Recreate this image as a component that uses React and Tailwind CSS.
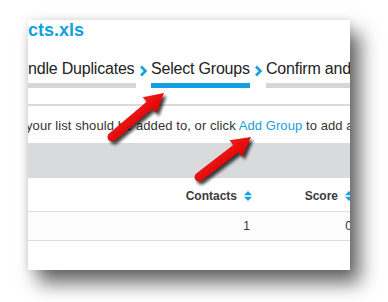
import React from "react";

function Chevron() {
  return (
    <svg width="9" height="14" viewBox="0 0 9 14" className="shrink-0">
      <polyline points="2,2.5 6.5,7 2,11.5" fill="none" stroke="#1a9ee0" strokeWidth="2.6" strokeLinecap="butt" strokeLinejoin="miter" />
    </svg>
  );
}

function SortIcon() {
  return (
    <svg width="8" height="10" viewBox="0 0 8 10" className="shrink-0">
      <polygon points="0,4.3 4,0 8,4.3" fill="#1a9ee0" />
      <polygon points="0,5.7 8,5.7 4,10" fill="#1a9ee0" />
    </svg>
  );
}

function Arrow({ x0, y0, x1, y1, id }) {
  const dx = x1 - x0;
  const dy = y1 - y0;
  const L = Math.sqrt(dx * dx + dy * dy);
  const a = (Math.atan2(dy, dx) * 180) / Math.PI;
  const w = 4.5;
  const h = 10.5;
  const hl = 19;
  const d = `M0 ${-w} L${L - hl} ${-w} L${L - hl} ${-h} L${L} 0 L${L - hl} ${h} L${L - hl} ${w} L0 ${w} A${w} ${w} 0 0 1 0 ${-w} Z`;
  return (
    <g>
      <g transform={`translate(${x0 + 2.5} ${y0 + 3}) rotate(${a})`} filter="url(#blur)">
        <path d={d} fill="#000" opacity="0.75" />
      </g>
      <g transform={`translate(${x0} ${y0}) rotate(${a})`}>
        <path d={d} fill={`url(#${id})`} />
      </g>
    </g>
  );
}

export default function App() {
  return (
    <div className="relative w-[388px] h-[302px] bg-white overflow-hidden" style={{ fontFamily: '"Liberation Sans", Arial, sans-serif' }}>
      <div className="pl-[28px] pt-[20px]">
        <div className="w-[322px] h-[250px] bg-white overflow-hidden shadow-[10px_13px_18px_rgba(0,0,0,0.6),0_0_8px_rgba(0,0,0,0.12)]">
          <div className="text-[18px] leading-[21px] font-bold text-[#139fe0] whitespace-nowrap">cts.xls</div>

          <div className="mt-[19px] flex items-start whitespace-nowrap text-[16px] leading-[18px] text-[#222]">
            <div className="flex flex-col w-[108px] shrink-0">
              <span className="tracking-[-0.2px]">ndle Duplicates</span>
              <div className="mt-[5px] h-[5px] bg-[#d6d6d6]" />
            </div>
            <div className="w-[15px] flex justify-center pt-[4px] shrink-0"><Chevron /></div>
            <div className="flex flex-col w-[99px] shrink-0">
              <span className="tracking-[-0.2px]">Select Groups</span>
              <div className="mt-[5px] h-[5px] bg-[#139fe0]" />
            </div>
            <div className="w-[16px] flex justify-center pt-[4px] shrink-0"><Chevron /></div>
            <div className="flex flex-col w-[120px] shrink-0">
              <span className="tracking-[-0.2px]">Confirm and Import</span>
              <div className="mt-[5px] h-[5px] bg-[#d6d6d6]" />
            </div>
          </div>

          <div className="mt-[16px] h-[2px] bg-[#dadada]" />

          <div className="mt-[12px] ml-[-2px] text-[13px] leading-[15px] text-[#333] whitespace-nowrap tracking-[0.08px]">
            your list should be added to, or click <span className="text-[#1a9ee0]">Add Group</span> to add a new group.
          </div>

          <div className="mt-[10px] h-[35px] bg-[#d9dadc]" />

          <div className="h-[34px] flex items-center text-[12px] leading-[14px] font-bold text-[#3a3a3a] border-b border-[#dddddd] whitespace-nowrap">
            <div className="w-[224px] shrink-0 flex justify-end items-center gap-[7px] pt-[2px]">
              <span>Contacts</span>
              <SortIcon />
            </div>
            <div className="w-[101px] shrink-0 flex justify-end items-center gap-[7px] pt-[2px]">
              <span>Score</span>
              <SortIcon />
            </div>
          </div>

          <div className="h-[29px] flex items-center text-[12px] leading-[14px] text-[#333] bg-[#fcfcfc] border-b border-[#dddddd] whitespace-nowrap">
            <div className="w-[222px] shrink-0 text-right">1</div>
            <div className="w-[102px] shrink-0 text-right">0</div>
          </div>
        </div>
      </div>

      <svg className="absolute left-0 top-0 pointer-events-none" width="388" height="302" viewBox="0 0 388 302">
        <defs>
          <filter id="blur" x="-20%" y="-20%" width="140%" height="140%">
            <feGaussianBlur stdDeviation="1.6" />
          </filter>
          <linearGradient id="g1" x1="0" y1="-1" x2="0" y2="1" gradientUnits="objectBoundingBox">
            <stop offset="0" stopColor="#ff3b3b" />
            <stop offset="1" stopColor="#e00000" />
          </linearGradient>
          <linearGradient id="g2" x1="0" y1="-1" x2="0" y2="1" gradientUnits="objectBoundingBox">
            <stop offset="0" stopColor="#ff3b3b" />
            <stop offset="1" stopColor="#e00000" />
          </linearGradient>
        </defs>
        <Arrow id="g1" x0={112} y0={137} x1={164} y1={93} />
        <Arrow id="g2" x0={199} y0={177} x1={251} y1={137} />
      </svg>
    </div>
  );
}
